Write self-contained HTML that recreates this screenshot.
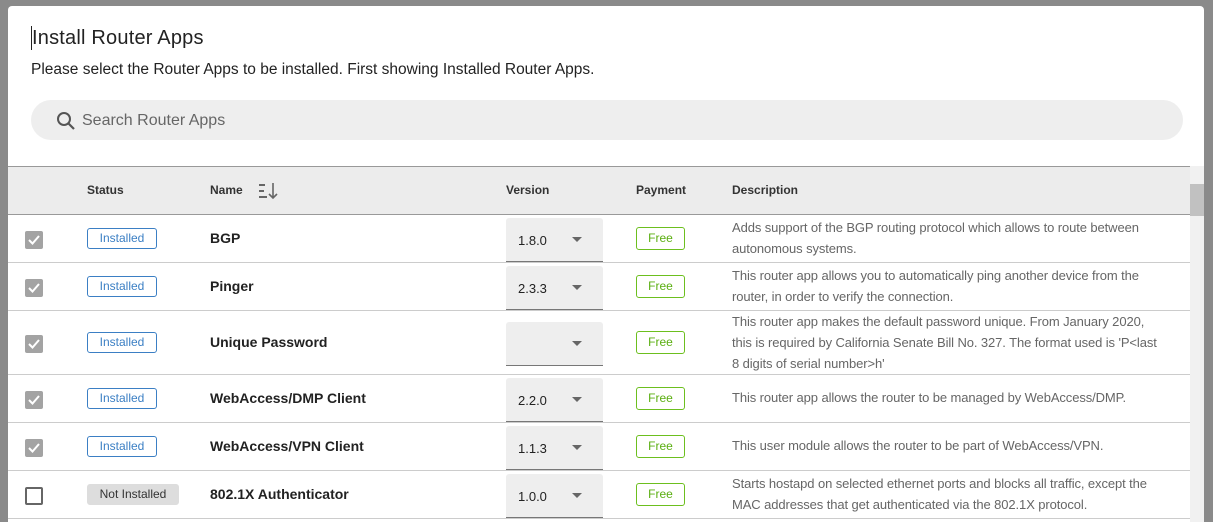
<html style="overflow:hidden"><head><style>
body{margin:0;width:1213px;height:522px;overflow:hidden;background:#8a8a8a;font-family:"Liberation Sans",sans-serif;position:relative}
.dlg{position:absolute;left:8px;top:6px;width:1196px;height:516px;background:#fff;border-radius:4px 4px 0 0;overflow:hidden}
h1{position:absolute;left:23px;top:20px;margin:0;font-size:20px;font-weight:normal;color:#222;border-left:1px solid #222;line-height:24px;letter-spacing:0.2px}
.sub{position:absolute;left:23px;top:55px;font-size:15.5px;color:#222}
.search{position:absolute;left:23px;top:94px;width:1152px;height:40px;border-radius:20px;background:#eee}
.search span{position:absolute;left:51px;top:12px;font-size:16px;color:#666}
.tbl{position:absolute;left:0;top:160px;width:1182px}
.hd{height:47px;background:#ececec;border-top:1px solid #999;border-bottom:1px solid #999;position:relative;font-size:12px;font-weight:bold;color:#333}
.hd span{position:absolute;top:16px}
.row{position:relative;border-bottom:1px solid #ccc;font-size:13px}
.row>*{position:absolute}
.cb{left:17px;width:18px;height:18px;border-radius:2px;background:#a3a3a3}
.cb svg{position:absolute;left:2px;top:3px}
.cb.off{background:#fff;border:2px solid #666;width:14px;height:14px}
.st{left:79px;width:68px;height:19px;border:1px solid #3b7fc4;border-radius:3px;color:#3b7fc4;font-size:12px;text-align:center;line-height:19px}
.st.n{background:#ddd;border-color:#ddd;color:#333;width:90px}
.nm{left:202px;font-weight:bold;font-size:14px;color:#222}
.ver{left:498px;width:97px;height:43px;background:#eee;border-bottom:1px solid #777;border-radius:3px 3px 0 0}
.ver b{position:absolute;left:12px;top:15px;font-weight:normal;font-size:13px;color:#222}
.ver i{position:absolute;left:66px;top:19px;border-left:5px solid transparent;border-right:5px solid transparent;border-top:5px solid #666}
.fr{left:628px;width:47px;height:21px;border:1px solid #6cbf1e;border-radius:3px;color:#5aae10;font-size:12px;text-align:center;line-height:21px}
.ds{left:724px;width:425px;color:#666;font-size:13px;line-height:21px;letter-spacing:-0.1px}
.sb{position:absolute;left:1182px;top:160px;width:14px;height:370px;background:#f1f1f1}
.sb div{position:absolute;top:18px;left:0;width:14px;height:32px;background:#c1c1c1}
</style></head><body>
<div class="dlg">
<h1>Install Router Apps</h1>
<div class="sub">Please select the Router Apps to be installed. First showing Installed Router Apps.</div>
<div class="search"><svg style="position:absolute;left:25px;top:11px" width="20" height="20" viewBox="0 0 20 20"><circle cx="8" cy="8" r="6" fill="none" stroke="#555" stroke-width="2"/><path d="M12.5 12.5L18 18" stroke="#555" stroke-width="2.2"/></svg><span>Search Router Apps</span></div>
<div class="tbl">
<div class="hd"><span style="left:79px">Status</span><span style="left:202px">Name</span>
<svg style="position:absolute;left:250px;top:15px" width="22" height="18"><path d="M1 3h6M1 9h5M1 15h8" stroke="#666" stroke-width="2"/><path d="M15 1v15M11 12l4 4 4-4" stroke="#666" stroke-width="1.6" fill="none"/></svg>
<span style="left:498px">Version</span><span style="left:628px">Payment</span><span style="left:724px">Description</span></div>
<div class="row" style="height:47px"><div class="cb" style="top:16px"><svg width="14" height="12"><path d="M2 6l3.5 3.5L12 2" stroke="#fff" stroke-width="2" fill="none"/></svg></div><div class="st" style="top:13px">Installed</div><div class="nm" style="top:15px">BGP</div><div class="ver" style="top:3px"><b>1.8.0</b><i></i></div><div class="fr" style="top:12px">Free</div><div class="ds" style="top:2px">Adds support of the BGP routing protocol which allows to route between autonomous systems.</div></div>
<div class="row" style="height:47px"><div class="cb" style="top:16px"><svg width="14" height="12"><path d="M2 6l3.5 3.5L12 2" stroke="#fff" stroke-width="2" fill="none"/></svg></div><div class="st" style="top:13px">Installed</div><div class="nm" style="top:15px">Pinger</div><div class="ver" style="top:3px"><b>2.3.3</b><i></i></div><div class="fr" style="top:12px">Free</div><div class="ds" style="top:2px">This router app allows you to automatically ping another device from the router, in order to verify the connection.</div></div>
<div class="row" style="height:63px"><div class="cb" style="top:24px"><svg width="14" height="12"><path d="M2 6l3.5 3.5L12 2" stroke="#fff" stroke-width="2" fill="none"/></svg></div><div class="st" style="top:21px">Installed</div><div class="nm" style="top:23px">Unique Password</div><div class="ver" style="top:11px"><i></i></div><div class="fr" style="top:20px">Free</div><div class="ds" style="top:0px">This router app makes the default password unique. From January 2020, this is required by California Senate Bill No. 327. The format used is 'P&lt;last 8 digits of serial number&gt;h'</div></div>
<div class="row" style="height:47px"><div class="cb" style="top:16px"><svg width="14" height="12"><path d="M2 6l3.5 3.5L12 2" stroke="#fff" stroke-width="2" fill="none"/></svg></div><div class="st" style="top:13px">Installed</div><div class="nm" style="top:15px">WebAccess/DMP Client</div><div class="ver" style="top:3px"><b>2.2.0</b><i></i></div><div class="fr" style="top:12px">Free</div><div class="ds" style="top:12px">This router app allows the router to be managed by WebAccess/DMP.</div></div>
<div class="row" style="height:47px"><div class="cb" style="top:16px"><svg width="14" height="12"><path d="M2 6l3.5 3.5L12 2" stroke="#fff" stroke-width="2" fill="none"/></svg></div><div class="st" style="top:13px">Installed</div><div class="nm" style="top:15px">WebAccess/VPN Client</div><div class="ver" style="top:3px"><b>1.1.3</b><i></i></div><div class="fr" style="top:12px">Free</div><div class="ds" style="top:12px">This user module allows the router to be part of WebAccess/VPN.</div></div>
<div class="row" style="height:47px"><div class="cb off" style="top:16px"></div><div class="st n" style="top:13px">Not Installed</div><div class="nm" style="top:15px">802.1X Authenticator</div><div class="ver" style="top:3px"><b>1.0.0</b><i></i></div><div class="fr" style="top:12px">Free</div><div class="ds" style="top:2px">Starts hostapd on selected ethernet ports and blocks all traffic, except the MAC addresses that get authenticated via the 802.1X protocol.</div></div>
</div>
<div class="sb"><div></div></div>
</div>
</body></html>
